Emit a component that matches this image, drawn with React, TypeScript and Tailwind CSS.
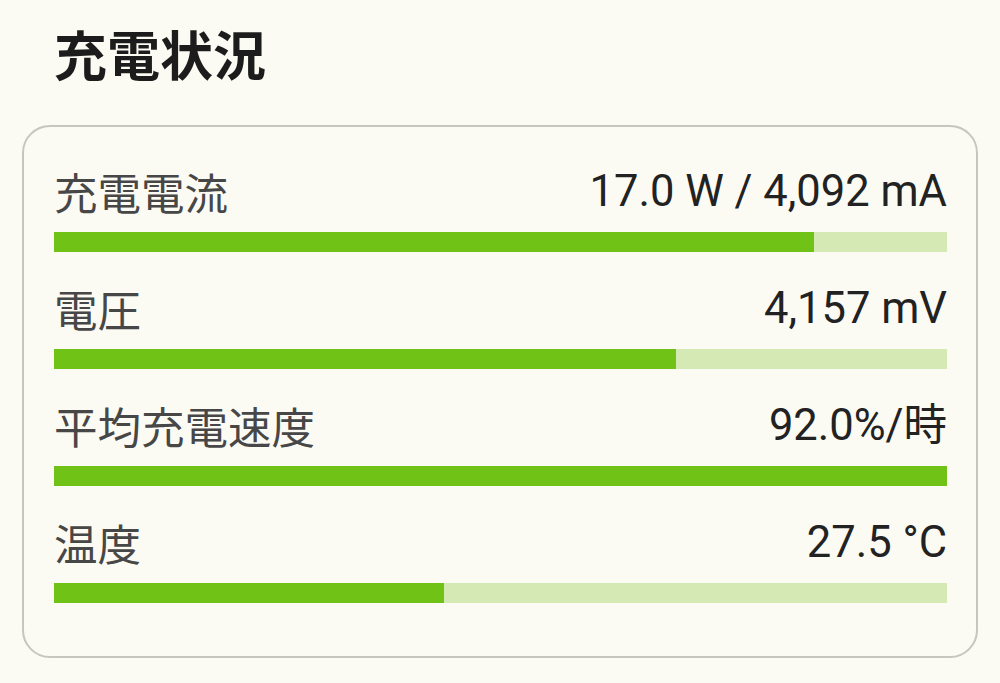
const rows = [
  { label: "充電電流", value: "17.0 W / 4,092 mA", ratio: 0.851 },
  { label: "電圧", value: "4,157 mV", ratio: 0.696 },
  { label: "平均充電速度", value: "92.0%/時", ratio: 1 },
  { label: "温度", value: "27.5 °C", ratio: 0.437 },
];

export default function App() {
  return (
    <div className="min-h-[683px] w-[1000px] bg-[#fcfbf3] pt-[21px] font-['Roboto','Noto_Sans_CJK_JP',sans-serif]">
      <h1 className="ml-[54px] h-[64px] text-[53px] leading-[64px] font-bold text-[#1c1c1c] font-['Noto_Sans_CJK_JP',sans-serif]">
        充電状況
      </h1>
      <div className="mx-[22px] mt-[40px] rounded-[28px] border-2 border-[#c6c6be] pl-[30px] pr-[29px] pt-[41px] pb-[53px]">
        {rows.map((r, i) => (
          <StatRow key={r.label} {...r} first={i === 0} />
        ))}
      </div>
    </div>
  );
}

function StatRow({
  label,
  value,
  ratio,
  first,
}: {
  label: string;
  value: string;
  ratio: number;
  first: boolean;
}) {
  return (
    <div className={first ? "" : "mt-[33px]"}>
      <div className="flex h-[48px] items-center justify-between">
        <span className="text-[43.5px] leading-[48px] text-[#474747] font-['Noto_Sans_CJK_JP',sans-serif]">
          {label}
        </span>
        <span className="text-[43.5px] leading-[48px] text-[#222222]">{value}</span>
      </div>
      <div className="mt-4 h-5 w-full bg-[#d4e9b4]">
        <div className="h-full bg-[#70c216]" style={{ width: `${ratio * 100}%` }} />
      </div>
    </div>
  );
}
